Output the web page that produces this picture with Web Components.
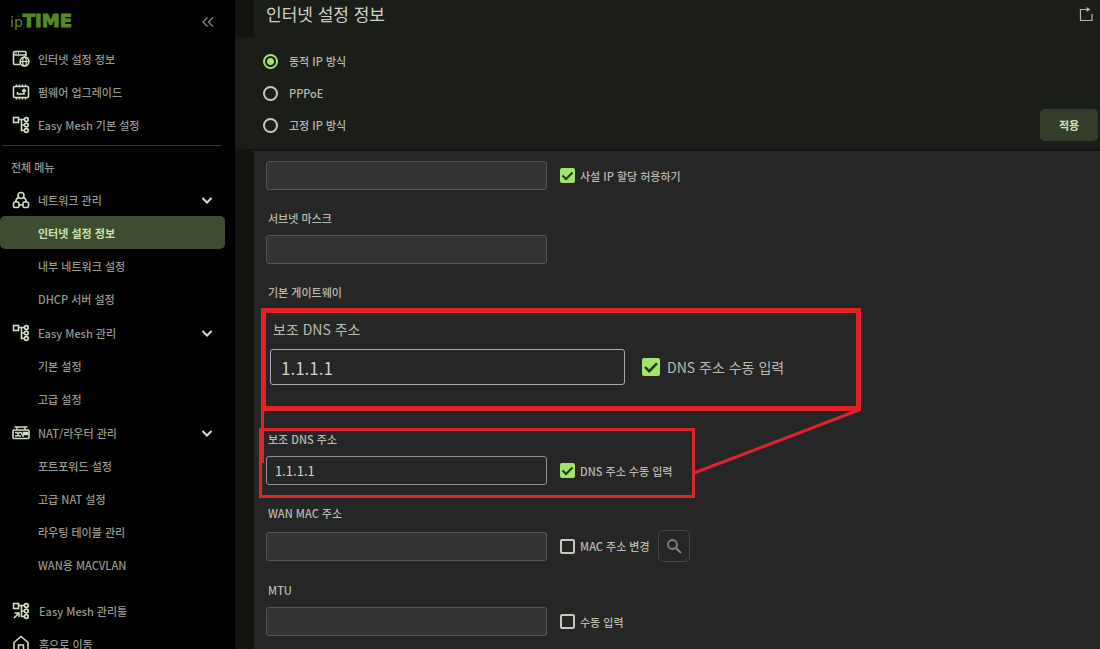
<!DOCTYPE html>
<html lang="ko">
<head>
<meta charset="utf-8">
<meta name="viewport" content="width=device-width, initial-scale=1">
<title>ipTIME - 인터넷 설정 정보</title>
<style>
  :root {
    --green: #a3e26e;
    --text: #b9bab1;
    --muted: #969791;
    --icon: #d3dfc3;
    --red: #e51f27;
  }
  body {
    margin: 0;
    height: 100vh;
    overflow: hidden;
    background: #000;
    color: var(--text);
    font: 500 11px/16px "Noto Sans CJK KR", "Noto Sans", sans-serif;
  }
</style>
</head>
<body>
<router-app>
  <side-bar slot="side">
    <nav-item icon="internet">인터넷 설정 정보</nav-item>
    <nav-item icon="firmware">펌웨어 업그레이드</nav-item>
    <nav-item icon="mesh">Easy Mesh 기본 설정</nav-item>
    <nav-group slot="menu">
      <nav-item icon="network" expanded>네트워크 관리</nav-item>
      <nav-item active>인터넷 설정 정보</nav-item>
      <nav-item>내부 네트워크 설정</nav-item>
      <nav-item>DHCP 서버 설정</nav-item>
    </nav-group>
    <nav-group slot="menu">
      <nav-item icon="mesh" expanded>Easy Mesh 관리</nav-item>
      <nav-item>기본 설정</nav-item>
      <nav-item>고급 설정</nav-item>
    </nav-group>
    <nav-group slot="menu">
      <nav-item icon="nat" expanded>NAT/라우터 관리</nav-item>
      <nav-item>포트포워드 설정</nav-item>
      <nav-item>고급 NAT 설정</nav-item>
      <nav-item>라우팅 테이블 관리</nav-item>
      <nav-item>WAN용 MACVLAN</nav-item>
    </nav-group>
    <nav-item slot="tools" icon="tool">Easy Mesh 관리툴</nav-item>
    <nav-item slot="tools" icon="home">홈으로 이동</nav-item>
  </side-bar>
  <page-head slot="head">인터넷 설정 정보</page-head>
  <settings-panel slot="panel">
    <form-field name="IP 주소" check="사설 IP 할당 허용하기" checked disabled></form-field>
    <form-field label="서브넷 마스크" disabled></form-field>
    <form-field label="기본 게이트웨이" disabled></form-field>
    <form-field class="primary" name="기본 DNS" disabled></form-field>
    <form-field label="보조 DNS 주소" value="1.1.1.1" check="DNS 주소 수동 입력" checked></form-field>
    <form-field label="WAN MAC 주소" check="MAC 주소 변경" search disabled></form-field>
    <form-field label="MTU" check="수동 입력" disabled></form-field>
    <zoom-callout slot="callout">
      <form-field large label="보조 DNS 주소" value="1.1.1.1" check="DNS 주소 수동 입력" checked></form-field>
    </zoom-callout>
  </settings-panel>
</router-app>

<script>
const icons = {
  internet: '<path d="M8 14.500H3Q1.500 14.500 1.500 13V3Q1.500 1.500 3 1.500H12.500Q14 1.500 14 3V6.500M2 5H13.500M3.500 3.300H4.500M6 3.300H7"/><circle cx="12.500" cy="11.500" r="4.400"/><ellipse cx="12.500" cy="11.500" rx="1.800" ry="4.300" stroke-width="1.200"/><path d="M8.200 11.500H16.800" stroke-width="1.200"/>',
  firmware: '<rect x="1.500" y="3.500" width="15" height="11" rx="1"/><path d="M4.500 3V1.500M7.500 3V1.500M10.500 3V1.500M13.500 3V1.500M4.500 15V16.500M7.500 15V16.500M10.500 15V16.500M13.500 15V16.500M5.500 9V11H12V7M10 8.500L12 6.500L14 8.500"/>',
  mesh: '<rect x="1.500" y="1.500" width="5" height="5"/><path d="M6.500 3.500H12M9.500 3.500V14.500H12M9.500 9H12"/><circle cx="14.300" cy="3.500" r="1.900"/><circle cx="14.300" cy="9" r="1.900"/><circle cx="14.300" cy="14.500" r="1.900"/>',
  network: '<circle cx="9" cy="4.500" r="3"/><rect x="1.500" y="11" width="5.500" height="5.500" rx="1.500"/><rect x="11" y="11" width="5.500" height="5.500" rx="1.500"/><path d="M6.500 6.500Q3.500 8 3.800 11M11.500 6.500Q14.500 8 14.200 11M7 14H11"/>',
  nat: '<rect x="1" y="6" width="16" height="8.500" rx="1"/><path d="M2.500 3H15.500M5 3V6M13 3V6M3 8.500H5L7 12H9M3 12H5L7 8.500H9L11 12H12" stroke-width="1.400"/><path d="M11.500 8.500H15.500V10.500H11.500Z" fill="currentColor"/>',
  tool: '<rect x="1.500" y="1.500" width="5" height="5"/><path d="M6.500 3.500H12M9.500 3.500V14.500H12M9.500 9H12M2 16L6.500 11.500M2.500 11H7V15"/><circle cx="14.300" cy="3.500" r="1.900"/><circle cx="14.300" cy="9" r="1.900"/><circle cx="14.300" cy="14.500" r="1.900"/>',
  home: '<path d="M2 16.500V7.500L9 1.500L16 7.500V16.500ZM6.500 16.500V10H11.500V16.500"/>'
};

function define(name, render) {
  customElements.define(name, class extends HTMLElement {
    constructor() {
      super();
      this.attachShadow({ mode: "open" });
    }
    connectedCallback() {
      this.shadowRoot.innerHTML = render(this);
    }
  });
}

define("router-app", () => `
  <style>
    :host { display: grid; grid-template-columns: 235px 1fr; grid-template-rows: 100%; height: 100%; }
    main { display: flex; flex-direction: column; min-width: 0; min-height: 0; background: #12140f; }
  </style>
  <slot name="side"></slot>
  <main><slot name="head"></slot><slot name="panel"></slot></main>`);

define("side-bar", () => `
  <style>
    :host { display: block; background: #000; color: var(--muted); min-height: 0; overflow: hidden; }
    header { display: flex; justify-content: space-between; align-items: center; height: 42px; padding: 0 21px 0 10px; }
    .logo { display: flex; align-items: baseline; color: #558b1e; text-decoration: none; font: 14px/20px "DejaVu Sans", sans-serif; }
    .logo b { font-size: 18px; -webkit-text-stroke: 1px #558b1e; }
    button { all: unset; display: flex; cursor: pointer; color: #85867f; }
    hr { margin: 4px 14px 13px 2px; border: 0; height: 1px; background: #353535; }
    h2 { margin: 0 0 8px 11px; font: inherit; }
    .tools { padding: 12px 0 0; --indent: 1px; }
  </style>
  <header>
    <a class="logo" href="#">ip<b>TIME</b></a>
    <button aria-label="메뉴 접기"><svg width="12" height="14" viewBox="0 0 12 14" fill="none" stroke="currentColor" stroke-width="1.300"><path d="M5.500 3.500L1 8L5.500 12.500M11 3.500L6.500 8L11 12.500"/></svg></button>
  </header>
  <nav>
    <slot></slot>
    <hr>
    <h2>전체 메뉴</h2>
    <slot name="menu"></slot>
    <div class="tools"><slot name="tools"></slot></div>
  </nav>`);

define("nav-group", () => `
  <style>:host { display: block; padding-bottom: 1px; }</style>
  <slot></slot>`);

define("nav-item", el => {
  const icon = el.getAttribute("icon");
  return `
  <style>
    :host { display: block; }
    a { display: grid; grid-template-columns: 18px 1fr 12px; column-gap: 8px; align-items: center; height: 33px;
        margin-right: 10px; padding: 0 12px; color: inherit; text-decoration: none; border-radius: 5px; }
    a.active { background: #3e4c30; color: #c8e3ae; font-weight: 700; }
    svg { display: block; color: var(--icon); fill: none; stroke: currentColor; }
    span { grid-column: 2; padding-left: var(--indent, 0); white-space: nowrap; }
  </style>
  <a href="#" class="${el.hasAttribute("active") ? "active" : ""}">
    ${icon ? `<svg width="18" height="18" viewBox="0 0 18 18" stroke-width="1.600">${icons[icon]}</svg>` : ""}
    <span><slot></slot></span>
    ${el.hasAttribute("expanded") ? '<svg width="12" height="12" viewBox="0 0 12 12" stroke-width="2"><path d="M1.500 4L6 8.500L10.500 4"/></svg>' : ""}
  </a>`;
});

define("page-head", () => `
  <style>
    :host { display: block; flex: none; background: #1b1d18; }
    header { display: flex; justify-content: space-between; height: 37px; border-left: 19px solid #12140f; padding: 0 7px 0 12px; }
    h1 { margin: 0; font-size: 17px; line-height: 28px; font-weight: 400; color: #d0d1c8; }
    button { font: inherit; cursor: pointer; border: 0; padding: 0; }
    .open { height: 28px; background: none; color: #b4b5ad; }
    .open svg { display: block; }
    form { display: flex; justify-content: space-between; align-items: flex-end; padding: 8px 2px 8px 28px; }
    fieldset { border: 0; margin: 0; padding: 0; }
    label { display: flex; align-items: center; gap: 11px; height: 32px; }
    input { appearance: none; width: 15px; height: 15px; margin: 0; border: 2px solid #c6c8be; border-radius: 50%; }
    input:checked { border-color: var(--green); background: radial-gradient(circle, var(--green) 3px, transparent 4px); }
    .apply { width: 58px; height: 32px; border-radius: 5px; background: #333d29; color: #d0e2bf; font-weight: 700; }
  </style>
  <header>
    <h1><slot></slot></h1>
    <button class="open" aria-label="새 창으로 열기"><svg width="14" height="16" viewBox="0 0 14 16" fill="none" stroke="currentColor"><path d="M9 3.500H1.500V14.500H13V8" stroke-width="1.200"/><path d="M7.500 1L11.500 3.500L7.500 6Z" fill="currentColor" stroke="none"/></svg></button>
  </header>
  <form>
    <fieldset aria-label="연결 방식">
      <label><input type="radio" name="mode" checked>동적 IP 방식</label>
      <label><input type="radio" name="mode">PPPoE</label>
      <label><input type="radio" name="mode">고정 IP 방식</label>
    </fieldset>
    <button type="button" class="apply">적용</button>
  </form>`);

define("settings-panel", () => `
  <style>
    :host { display: block; position: relative; flex: 1; min-height: 0; margin: 2px 0 0 19px; padding: 10px 12px 0; background: #262626; }
    .fields { display: flex; flex-direction: column; gap: 20px; }
  </style>
  <div class="fields"><slot></slot></div>
  <slot name="callout"></slot>`);

define("form-field", el => {
  const get = name => el.getAttribute(name) || "";
  const label = get("label");
  const check = get("check");
  const checked = el.hasAttribute("checked") ? "checked" : "";
  return `
  <style>
    :host { display: block; }
    :host(.primary) { padding-top: 24px; }
    .label { display: block; height: 16px; margin: 0 0 9px 2px; }
    .row { display: flex; align-items: center; gap: 13px; }
    input { box-sizing: border-box; margin: 0; }
    input[type=text] { flex: none; width: 281px; height: 29px; padding: 0 8px; border: 1px solid #929292; border-radius: 3px;
      background: transparent; color: #d1d2c9; font: inherit; font-size: 13px; font-weight: 400; outline: 0; }
    input[type=text]:disabled { background: #343434; border-color: #555; }
    .check { display: flex; align-items: center; gap: 5px; white-space: nowrap; }
    .box { display: grid; flex: none; width: 15px; height: 15px; }
    .box > * { grid-area: 1 / 1; width: 100%; height: 100%; }
    .box svg { pointer-events: none; fill: none; stroke: #1e3b0c; stroke-width: 2; }
    input[type=checkbox] { appearance: none; border: 2px solid #c6c8be; border-radius: 2px; }
    input[type=checkbox]:checked { background: var(--green); border-color: var(--green); }
    input[type=checkbox]:not(:checked) + svg { visibility: hidden; }
    button { display: grid; place-items: center; width: 32px; height: 32px; margin-left: -5px; padding: 0; background: none;
      border: 1px solid #444; border-radius: 5px; color: #83847e; }
    :host([large]) { font-size: 14px; line-height: 22px; font-weight: 400; }
    :host([large]) .label { height: 22px; margin: 0 0 9px 3px; }
    :host([large]) .row { gap: 17px; }
    :host([large]) input[type=text] { width: 355px; height: 36px; padding: 0 10px; border-color: #aaa; font-size: 17px; }
    :host([large]) .box { width: 18px; height: 18px; }
    :host([large]) .check { gap: 7px; }
  </style>
  ${label ? `<label class="label" for="value">${label}</label>` : ""}
  <div class="row">
    <input type="text" id="value" value="${get("value")}" ${label ? "" : `aria-label="${get("name")}"`} ${el.hasAttribute("disabled") ? "disabled" : ""}>
    ${check ? `<label class="check"><span class="box"><input type="checkbox" ${checked}><svg width="15" height="15" viewBox="0 0 15 15"><path d="M2.500 7.500L6 11L12.500 4.500"/></svg></span>${check}</label>` : ""}
    ${el.hasAttribute("search") ? '<button type="button" aria-label="검색"><svg width="16" height="16" viewBox="0 0 16 16" fill="none" stroke="currentColor" stroke-width="1.800"><circle cx="6.500" cy="6.500" r="4.500"/><path d="M10 10L15 15"/></svg></button>' : ""}
  </div>`;
});

define("zoom-callout", () => `
  <style>
    :host { position: absolute; left: 5px; top: 157px; width: 602px; height: 190px; }
    .detail { position: absolute; left: 2px; top: 0; box-sizing: border-box; width: 600px; height: 103px; padding: 5px 4px;
      border: 5px solid var(--red); background: #262626; }
    .source { position: absolute; left: 0; top: 120px; box-sizing: border-box; width: 436px; height: 70px; border: 3px solid #da252c; pointer-events: none; }
    svg { position: absolute; left: 0; top: 0; fill: none; stroke: #da252c; stroke-width: 3; pointer-events: none; }
  </style>
  <div class="detail"><slot></slot></div>
  <div class="source"></div>
  <svg width="602" height="190" viewBox="0 0 602 190"><path d="M3.500 102V155M435 165L600 102"/></svg>`);
</script>
</body>
</html>
